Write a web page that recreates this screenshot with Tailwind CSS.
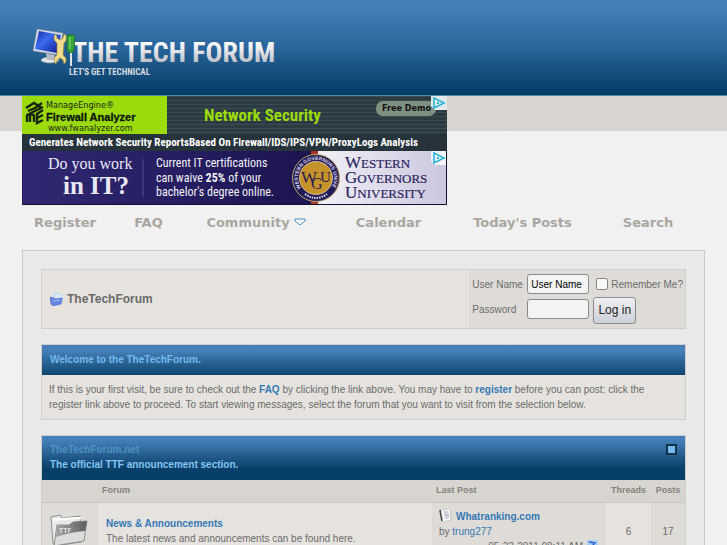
<!DOCTYPE html>
<html lang="en">
<head>
    <meta charset="UTF-8">
    <meta name="viewport" content="width=device-width, initial-scale=1.0">
    <title>TheTechForum</title>
    <script src="https://cdn.jsdelivr.net/npm/@tailwindcss/browser@4"></script>
</head>
<body class="bg-[#f1f1f1] font-['Liberation_Sans',Arial,sans-serif] text-[10px] leading-[15px] text-[#6b6b6b]">

    <!-- Header -->
    <header class="h-24 border-b border-[#5c8aa5] bg-linear-to-b from-[#447fb9] from-10% via-[#29659a] via-50% to-[#063f68] to-95% px-8 pt-[28px]">
        <a href="#" aria-label="The Tech Forum, let's get technical" class="block">
            <svg width="245" height="54" viewBox="0 0 245 54" role="img">
                <defs>
                    <linearGradient id="logo" x1="0" y1="0" x2="0" y2="1">
                        <stop offset=".2" stop-color="#fff"/>
                        <stop offset=".85" stop-color="#b9bbc4"/>
                    </linearGradient>
                    <linearGradient id="screen" x1="0" y1="0" x2="1" y2="1">
                        <stop offset="0" stop-color="#1626a8"/>
                        <stop offset=".4" stop-color="#3c6cf0"/>
                        <stop offset="1" stop-color="#0a1690"/>
                    </linearGradient>
                </defs>
                <text x="40" y="34" font-family="'Liberation Sans Narrow','Roboto Condensed','DejaVu Sans Condensed',sans-serif" font-weight="bold" font-size="28" fill="url(#logo)">THE TECH FORUM</text>
                <text x="37" y="47" font-family="'Liberation Sans Narrow','Roboto Condensed','DejaVu Sans Condensed',sans-serif" font-weight="bold" font-size="9" fill="#d5dae0">LET'S GET TECHNICAL</text>
                <ellipse cx="18" cy="32" rx="9" ry="3" fill="#e4e6ea" stroke="#8b929e" stroke-width=".6"/>
                <path d="M14 25l9 2-1 5h-7z" fill="#b5bac4"/>
                <path d="M5 1l26 4-4 22L1 23z" fill="#d7dce6" stroke="#7f8a9e" stroke-width=".7"/>
                <path d="M7 3l22 4-4 18L3 21z" fill="url(#screen)"/>
                <path d="M24 6l1 4 3 2 3-2 1-4c3 1 4 6 0 9l-1 12c4 3 4 7 1 9l-1-4-3-2-3 2-1 4c-3-3-2-7 1-9V15c-4-3-4-7-1-9z" fill="#f0dc8b" stroke="#9a8434" stroke-width=".7"/>
                <path d="M36 7h6l1 3-1 12-2 3h-3l-2-4V9z" fill="#34a536" stroke="#145e1e" stroke-width=".7"/>
                <path d="M38 9v12" stroke="#8ce27b"/>
                <path d="M39 25v13" stroke="#dce4ea" stroke-width="2"/>
            </svg>
        </a>
    </header>

    <!-- Banners -->
    <div class="bg-linear-to-b from-[#d8d5d0] from-[35px] to-[#f1f1f1] to-[35px] px-[22px]">
        <a href="#" aria-label="Network Security, Firewall Analyzer" class="block">
            <svg width="425" height="55" viewBox="0 0 425 55" role="img">
                <defs>
                    <pattern id="lines" width="4" height="4" patternUnits="userSpaceOnUse">
                        <rect width="4" height="4" fill="#2c3b42"/>
                        <rect width="4" height="1" fill="#3b4b52"/>
                    </pattern>
                </defs>
                <rect width="425" height="55" fill="url(#lines)"/>
                <rect width="145" height="38" fill="#9bdb0b"/>
                <rect y="38" width="425" height="17" fill="#26333b"/>
                <g fill="none" stroke="#17250a" stroke-width="2.4">
                    <path d="M4 12l8-5 8 5M6 15l7-3 7-5M7 18l6-3 8-4"/>
                    <path d="M5 26v-6c0-2 3-2 3 0v6M8 20c0-2 4-2 4 0v6M21 14l-6 4v9l6-3M15 22l6-3"/>
                </g>
                <text x="24" y="12" font-family="'DejaVu Sans Condensed','DejaVu Sans',sans-serif" font-size="9" fill="#17250a">ManageEngine®</text>
                <text x="24" y="25" font-family="'Liberation Sans',sans-serif" font-weight="bold" font-size="11" fill="#0c1504" stroke="#0c1504" stroke-width=".3">Firewall Analyzer</text>
                <text x="26" y="35" font-family="'DejaVu Sans Condensed','DejaVu Sans',sans-serif" font-size="9" fill="#17250a">www.fwanalyzer.com</text>
                <text x="182" y="25" font-family="'Liberation Sans Narrow','Roboto Condensed','DejaVu Sans Condensed',sans-serif" font-weight="bold" font-size="17" fill="#9bdb0b">Network Security</text>
                <rect x="354" y="5" width="60" height="15" rx="7" fill="#7d9180"/>
                <text x="360" y="15" font-family="'DejaVu Sans Condensed','DejaVu Sans',sans-serif" font-weight="bold" font-size="9" fill="#111">Free Demo</text>
                <text x="7" y="50" font-family="'Liberation Sans Narrow','Roboto Condensed','DejaVu Sans Condensed',sans-serif" font-weight="bold" font-size="11" fill="#fff">Generates Network Security ReportsBased On Firewall/IDS/IPS/VPN/ProxyLogs Analysis</text>
                <path d="M409 0h16v14h-12l-4-4z" fill="#e4eaeb"/>
                <path d="M412 2v10l10-5z" fill="none" stroke="#27b4da" stroke-width="1.6"/>
                <path d="M416 6v2" stroke="#27b4da" stroke-width="2"/>
            </svg>
        </a>
        <a href="#" aria-label="Western Governors University" class="block">
            <svg width="425" height="54" viewBox="0 0 425 54" role="img">
                <defs>
                    <linearGradient id="wgu" x1="0" y1="0" x2="1" y2="0">
                        <stop offset="0" stop-color="#302873"/>
                        <stop offset="1" stop-color="#1c1550"/>
                    </linearGradient>
                    <linearGradient id="pale" x1="0" y1="0" x2="1" y2="0">
                        <stop offset="0" stop-color="#f1f0f7"/>
                        <stop offset="1" stop-color="#cbc7de"/>
                    </linearGradient>
                    <path id="ring" d="M279 37a18 18 0 1 1 30 0"/>
                </defs>
                <rect width="290" height="54" fill="url(#wgu)"/>
                <rect x="289" width="7" height="54" fill="#a93422"/>
                <rect x="296" width="129" height="54" fill="url(#pale)"/>
                <text x="26" y="18" font-family="'Liberation Serif',serif" font-size="16" fill="#e9e8f5">Do you work</text>
                <text x="41" y="43" font-family="'Liberation Serif',serif" font-weight="bold" font-size="25" fill="#e9e8f5">in IT?</text>
                <path d="M121 8v38" stroke="#514a91"/>
                <g font-family="'Liberation Sans Narrow','Roboto Condensed','DejaVu Sans Condensed',sans-serif" font-size="12" fill="#f3f2fa">
                    <text x="134" y="16">Current IT certifications</text>
                    <text x="134" y="31">can waive <tspan font-weight="bold">25%</tspan> of your</text>
                    <text x="134" y="45">bachelor's degree online.</text>
                </g>
                <circle cx="294" cy="27" r="23.5" fill="#241c58" stroke="#b9a46f"/>
                <text font-family="'Liberation Sans',sans-serif" font-weight="bold" font-size="5" fill="#dcdaea"><textPath href="#ring">WESTERN GOVERNORS UNIVERSITY</textPath></text>
                <path d="M283 43q11 8 22 0" fill="none" stroke="#dcdaea" stroke-width="2" stroke-dasharray="1.5 1"/>
                <circle cx="294" cy="27" r="16.5" fill="#c6932b" stroke="#efe2b0" stroke-width=".7"/>
                <g font-family="'Liberation Serif',serif" fill="#2a2050">
                    <text x="279" y="32" font-size="17">W</text>
                    <text x="298" y="31" font-size="15">U</text>
                    <text x="289" y="38" font-size="16">G</text>
                </g>
                <g font-family="'Liberation Serif',serif" font-size="13" fill="#2b2462" stroke="#2b2462" stroke-width=".2">
                    <text x="323" y="17"><tspan font-size="17">W</tspan>ESTERN</text>
                    <text x="323" y="32"><tspan font-size="17">G</tspan>OVERNORS</text>
                    <text x="323" y="47"><tspan font-size="17">U</tspan>NIVERSITY</text>
                </g>
                <path d="M409 0h16v14h-12l-4-4z" fill="#f4f4fa"/>
                <path d="M412 2v10l10-5z" fill="none" stroke="#27b4da" stroke-width="1.6"/>
                <path d="M416 6v2" stroke="#27b4da" stroke-width="2"/>
                <path d="M0 0v53.5h424.5V0" fill="none" stroke="#15122f"/>
            </svg>
        </a>
    </div>

    <!-- Navigation -->
    <nav class="mx-[22px] grid h-[45px] grid-cols-[86fr_81fr_134fr_131fr_137fr_114fr] items-center pb-[11px] text-center font-['DejaVu_Sans',Verdana,sans-serif] text-[13px] font-bold text-[#aaa69f]">
        <a href="#">Register</a>
        <a href="#">FAQ</a>
        <a href="#" class="flex items-center justify-center gap-1">Community
            <svg width="12" height="8" viewBox="0 0 12 8"><path d="M1 1h10v2L6 7 1 3z" fill="#f4f8fb" stroke="#4a8fc0"/></svg>
        </a>
        <a href="#">Calendar</a>
        <a href="#">Today's Posts</a>
        <a href="#">Search</a>
    </nav>

    <main class="mx-[22px] border border-[#c9c9c9] bg-[#e9e9e9] p-[18px]">

        <!-- Login -->
        <div class="flex items-stretch border border-[#cfcecb] bg-[#e6e3de]">
            <h1 class="flex flex-1 items-center gap-1 pl-2 text-[12px] font-bold">
                <svg width="13" height="13" viewBox="0 0 13 13">
                    <path d="M4 1l6-1 3 3-1 7-8-2z" fill="#d8ecfb" stroke="#a3c3e4" stroke-width=".6"/>
                    <path d="M0 4l4 1 1 1 7-1-1 6-8 2-2-2z" fill="#6685e3" stroke="#4764c8" stroke-width=".6"/>
                    <path d="M3 8l7-1" stroke="#a9bdf6"/>
                </svg>
                TheTechForum
            </h1>
            <form class="grid grid-cols-[51px_62px_auto] items-center gap-x-1 bg-[#dfdcd7] py-1 pr-[2px] pl-[3px]">
                <label for="username">User Name</label>
                <input id="username" type="text" value="User Name" class="h-5 w-full rounded-[3px] border border-[#8a8a8a] bg-[#f4f4f4] px-[3px] text-[10px] text-black">
                <label class="flex items-center gap-[3px] pl-[3px]">
                    <input type="checkbox" class="size-3 appearance-none rounded-[2px] border border-[#8a8a8a] bg-[#f8f8f8]">
                    Remember Me?
                </label>
                <label for="password">Password</label>
                <input id="password" type="password" class="h-5 w-full rounded-[3px] border border-[#8a8a8a] bg-[#f4f4f4] px-[3px] text-[10px]">
                <div>
                    <button type="submit" class="mt-[3px] h-[27px] w-[43px] rounded-[3px] border border-[#8a8a8a] bg-linear-to-b from-[#efeff3] to-[#ced0da] text-[12px] text-[#222]">Log in</button>
                </div>
            </form>
        </div>

        <!-- Welcome -->
        <section class="mt-[15px] border border-[#cfcecb] bg-[#e6e3de]">
            <h2 class="h-[30px] bg-linear-to-b from-[#447fb9] from-20% to-[#0b456f] px-2 py-[7px] font-bold text-[#74baee]">Welcome to the TheTechForum.</h2>
            <p class="p-[7px]">
                If this is your first visit, be sure to check out the <a href="#" class="font-bold text-[#3578b5]">FAQ</a> by clicking the link above. You may have to <a href="#" class="font-bold text-[#3578b5]">register</a> before you can post: click the register link above to proceed. To start viewing messages, select the forum that you want to visit from the selection below.
            </p>
        </section>

        <!-- Forums -->
        <section class="mt-[15px] border border-[#cfcecb] bg-[#e6e3de]">
            <div class="flex h-[44px] items-start justify-between bg-linear-to-b from-[#447fb9] from-10% to-[#063f68] to-75% px-2 pt-[6px] font-bold">
                <div>
                    <h2><a href="#" class="text-[#4f91c4]">TheTechForum.net</a></h2>
                    <p class="text-[#84c6f4]">The official TTF announcement section.</p>
                </div>
                <button type="button" aria-label="Collapse" class="mt-[2px] size-[11px] border-2 border-[#0d3249] bg-[#74b9ef]"></button>
            </div>
            <table class="w-full table-fixed border-collapse">
                <colgroup>
                    <col class="w-[56px]">
                    <col>
                    <col class="w-[174px]">
                    <col class="w-[45px]">
                    <col class="w-[34px]">
                </colgroup>
                <thead class="h-[22px] border-b border-[#cbc9c4] bg-[#d8d5d0] text-[9px] text-[#85817b]">
                    <tr>
                        <th></th>
                        <th class="px-1 text-left">Forum</th>
                        <th class="px-1 text-left">Last Post</th>
                        <th>Threads</th>
                        <th>Posts</th>
                    </tr>
                </thead>
                <tbody>
                    <tr>
                        <td class="bg-[#dfdcd7] p-2">
                            <svg width="38" height="34" viewBox="0 0 38 34">
                                <defs>
                                    <linearGradient id="folder" x1="0" y1="0" x2="1" y2="0">
                                        <stop offset="0" stop-color="#a5a5a5"/>
                                        <stop offset="1" stop-color="#5f5f5f"/>
                                    </linearGradient>
                                </defs>
                                <path d="M1 3l9-2 2 3 18-2 1 26-26 4-2-3z" fill="#e9e9e9" stroke="#909090"/>
                                <path d="M3 6l7-1 21-1" fill="none" stroke="#fff" stroke-width="2"/>
                                <path d="M7 11l12 0 4-3 14-1-3 20-30 5z" fill="#dcdcdc" stroke="#8e8e8e"/>
                                <path d="M7 11l12 0 4-3 14-1-2 10q-14 1-29 6z" fill="url(#folder)"/>
                                <text x="9" y="19" font-family="'Liberation Sans Narrow','Roboto Condensed',sans-serif" font-size="8" fill="#fff">TTF</text>
                            </svg>
                        </td>
                        <td class="p-2">
                            <a href="#" class="font-bold text-[#3578b5]">News &amp; Announcements</a>
                            <p>The latest news and announcements can be found here.</p>
                        </td>
                        <td class="bg-[#dfdcd7] px-[7px] py-[6px]">
                            <div class="flex items-center gap-1">
                                <svg width="13" height="14" viewBox="0 0 13 14">
                                    <path d="M1 1l10-1 1 11-8 2-2-2z" fill="#f7f7f7" stroke="#b9b9b9" stroke-width=".7"/>
                                    <path d="M1 1l2 11" stroke="#444" stroke-width="1.5"/>
                                    <path d="M5 3l4 0M5 5l5 0M5 7l5-1M6 9l4-1" stroke="#8f96a8" stroke-width=".8"/>
                                </svg>
                                <a href="#" class="font-bold text-[#3578b5]">Whatranking.com</a>
                            </div>
                            <div>by <a href="#" class="text-[#3578b5]">trung277</a></div>
                            <div class="flex items-center justify-end gap-1">
                                05-22-2011 08:11 AM
                                <a href="#" aria-label="Go to last post">
                                    <svg width="12" height="12" viewBox="0 0 12 12"><rect width="11" height="11" rx="1" fill="#a9cdf5"/><path d="M2 2l6 1-2 2 3 4M3 8l3-3" fill="none" stroke="#2960c4" stroke-width="1.3"/></svg>
                                </a>
                            </div>
                        </td>
                        <td class="text-center">6</td>
                        <td class="bg-[#dfdcd7] text-center">17</td>
                    </tr>
                </tbody>
            </table>
        </section>
    </main>
</body>
</html>
